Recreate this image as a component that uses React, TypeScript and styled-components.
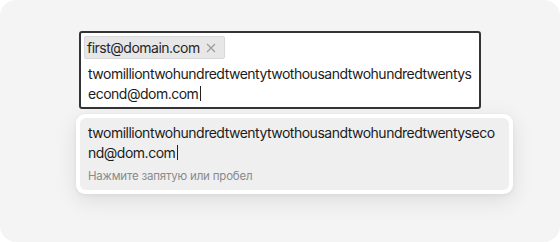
import React from "react";
import styled, { createGlobalStyle } from "styled-components";

const GlobalStyle = createGlobalStyle`
    html, body {
        margin: 0;
        padding: 0;
        background: #ffffff;
    }

    body {
        font-family: Inter, "Noto Sans", sans-serif;
        color: #1c1c1c;
    }
`;

const Frame = styled.div`
    width: 560px;
    height: 242px;
    box-sizing: border-box;
    background: #f4f4f4;
    border-radius: 16px;
    padding: 31px 0 0 76px;
`;

const Field = styled.div`
    width: 402px;
    margin-left: 3px;
    box-sizing: border-box;
    border: 2px solid #343434;
    border-radius: 3px;
    background: #fff;
    padding: 3px;
    display: flex;
    flex-direction: column;
    align-items: flex-start;
    gap: 5px;
`;

const Tag = styled.span`
    display: inline-flex;
    align-items: center;
    gap: 6px;
    height: 23px;
    box-sizing: border-box;
    padding: 0 8px 0 2px;
    background: #e7e7e7;
    border: 1px solid #d8d8d8;
    border-radius: 2px;
    font-size: 14px;
    line-height: 20px;
    letter-spacing: -0.5px;
    color: #262626;
`;

const RemoveIcon = styled.svg`
    width: 10px;
    height: 10px;
    stroke: #9a9a9a;
    stroke-width: 1.1;
`;

const Entry = styled.div`
    align-self: stretch;
    padding: 0 2px 0 4px;
    font-size: 14px;
    line-height: 20px;
    letter-spacing: -0.5px;
    word-break: break-all;
`;

const Caret = styled.span`
    display: inline-block;
    width: 1px;
    height: 15px;
    margin-left: 1.5px;
    background: #222;
    vertical-align: -2px;
`;

const Menu = styled.div`
    width: 437px;
    margin-top: 5px;
    box-sizing: border-box;
    padding: 4px;
    background: #fff;
    border-radius: 9px;
    box-shadow: 0 6px 22px rgba(0, 0, 0, 0.1), 0 1px 4px rgba(0, 0, 0, 0.05);
`;

const Option = styled.div`
    background: #efefef;
    border-radius: 6px;
    padding: 5px 8px 6px;
`;

const OptionText = styled.div`
    font-size: 14px;
    line-height: 20px;
    letter-spacing: -0.5px;
    word-break: break-all;
`;

const Hint = styled.div`
    margin-top: 5px;
    font-size: 11.5px;
    line-height: 16px;
    letter-spacing: -0.2px;
    color: #8a8a8a;
`;

const typed = "twomilliontwohundredtwentytwothousandtwohundredtwentysecond@dom.com";

export default function App() {
    return (
        <>
            <GlobalStyle />
            <Frame>
                <Field>
                    <Tag>
                        first@domain.com
                        <RemoveIcon viewBox="0 0 10 10" fill="none">
                            <path d="M1 1 L9 9 M9 1 L1 9" />
                        </RemoveIcon>
                    </Tag>
                    <Entry>
                        {typed}
                        <Caret />
                    </Entry>
                </Field>
                <Menu>
                    <Option>
                        <OptionText>
                            {typed}
                            <Caret />
                        </OptionText>
                        <Hint>Нажмите запятую или пробел</Hint>
                    </Option>
                </Menu>
            </Frame>
        </>
    );
}
